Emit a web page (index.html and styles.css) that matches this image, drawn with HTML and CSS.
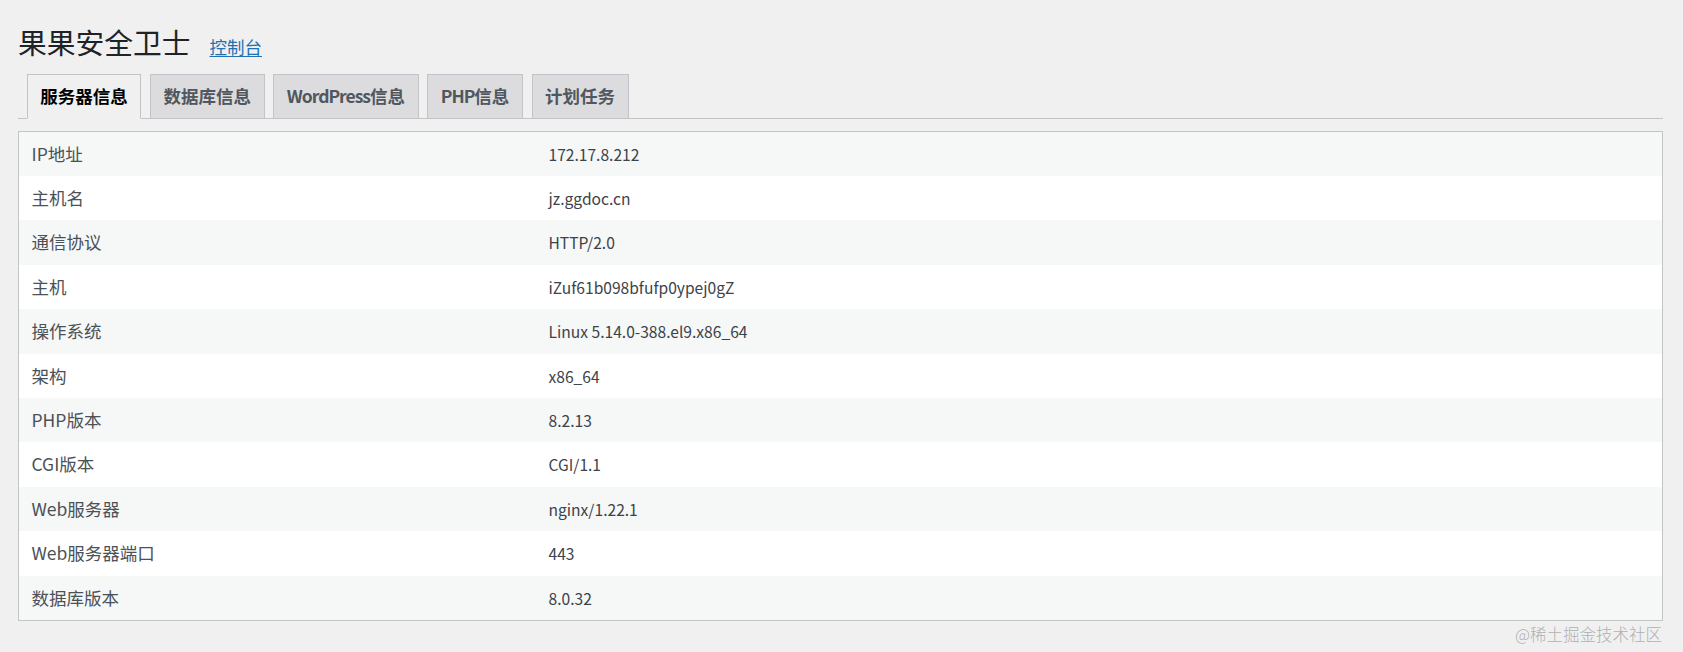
FILE: index.html
```html
<!DOCTYPE html>
<html lang="zh-CN">
<head>
<meta charset="utf-8">
<title>果果安全卫士</title>
<link rel="stylesheet" href="styles.css">
</head>
<body>
<div class="wrap">
  <div class="header">
    <h1 class="title">果果安全卫士</h1>
    <a class="title-action" href="#">控制台</a>
  </div>
  <nav class="tabs">
    <a class="tab tab-active" href="#">服务器信息</a>
    <a class="tab" href="#">数据库信息</a>
    <a class="tab" href="#"><span class="latin">WordPress</span>信息</a>
    <a class="tab" href="#"><span class="latin">PHP</span>信息</a>
    <a class="tab" href="#">计划任务</a>
  </nav>
  <table class="info">
    <tbody>
      <tr><td class="label">IP地址</td><td class="value">172.17.8.212</td></tr>
      <tr><td class="label">主机名</td><td class="value">jz.ggdoc.cn</td></tr>
      <tr><td class="label">通信协议</td><td class="value">HTTP/2.0</td></tr>
      <tr><td class="label">主机</td><td class="value">iZuf61b098bfufp0ypej0gZ</td></tr>
      <tr><td class="label">操作系统</td><td class="value">Linux 5.14.0-388.el9.x86_64</td></tr>
      <tr><td class="label">架构</td><td class="value">x86_64</td></tr>
      <tr><td class="label">PHP版本</td><td class="value">8.2.13</td></tr>
      <tr><td class="label">CGI版本</td><td class="value">CGI/1.1</td></tr>
      <tr><td class="label">Web服务器</td><td class="value">nginx/1.22.1</td></tr>
      <tr><td class="label">Web服务器端口</td><td class="value">443</td></tr>
      <tr><td class="label">数据库版本</td><td class="value">8.0.32</td></tr>
    </tbody>
  </table>
</div>
<div class="watermark">@稀土掘金技术社区</div>
</body>
</html>
```
FILE: styles.css
```css
html, body {
  margin: 0;
  padding: 0;
  background: #f0f0f1;
}
body {
  font-family: "Noto Sans CJK SC", "Noto Sans", sans-serif;
  color: #3c434a;
  height: 652px;
  overflow: hidden;
  position: relative;
}
.wrap {
  margin: 0 20px 0 18px;
}
.header {
  display: flex;
  align-items: baseline;
  gap: 19px;
  padding-top: 23px;
}
.title {
  margin: 0;
  font-size: 28.75px;
  font-weight: 400;
  line-height: 37.4px;
  color: #1d2327;
}
.title-action {
  font-size: 17.5px;
  color: #2271b1;
  text-decoration: underline;
  text-underline-offset: 2px;
}
.tabs {
  display: flex;
  margin-top: 13.6px;
  border-bottom: 1px solid #c3c4c7;
}
.tab {
  margin-left: 8.75px;
  padding: 6.25px 12.5px;
  font-size: 17.5px;
  line-height: 30px;
  font-weight: 600;
  color: #50575e;
  background: #dcdcde;
  border: 1px solid #c3c4c7;
  border-bottom: none;
  text-decoration: none;
}
.tab .latin {
  letter-spacing: -1px;
}
.tab-active {
  color: #000;
  background: #f0f0f1;
  margin-bottom: -1px;
  border-bottom: 1px solid #f0f0f1;
}
.info {
  margin-top: 12px;
  width: 100%;
  border: 1px solid #c3c4c7;
  border-spacing: 0;
  table-layout: fixed;
  background: #fff;
}
.info td {
  padding: 10px 12.5px;
  line-height: 24.4px;
  vertical-align: middle;
}
.info tr:nth-child(odd) td {
  background: #f6f7f7;
}
.label {
  width: 517px;
  box-sizing: border-box;
  font-size: 17.5px;
  color: #4a5157;
}
.value {
  font-size: 15.6px;
  color: #3c434a;
}
.watermark {
  position: absolute;
  right: 21px;
  top: 623px;
  font-size: 16.5px;
  line-height: 22px;
  color: #b0b0b0;
  font-weight: 300;
}
```
